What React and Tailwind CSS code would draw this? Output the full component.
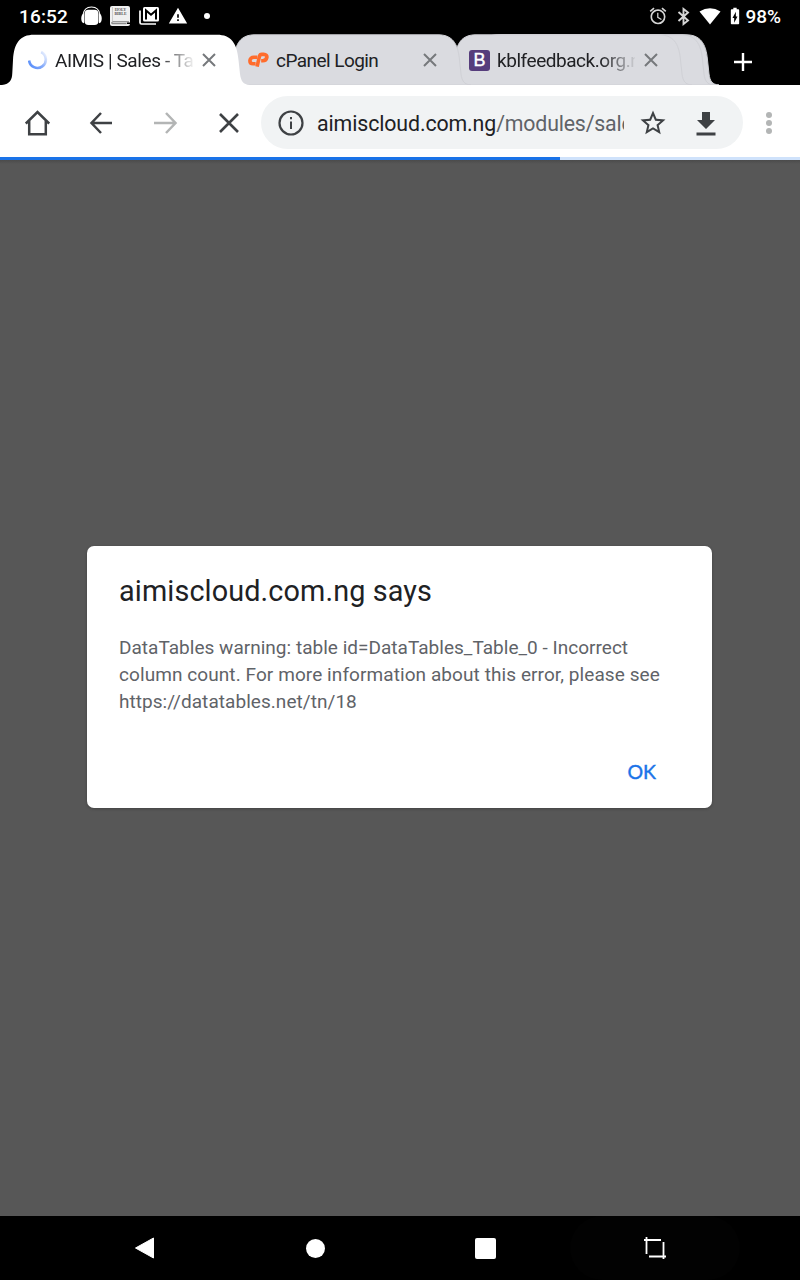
import React from "react";
import { MdAlarm, MdWarning, MdStarBorder, MdBatteryChargingFull } from "react-icons/md";

function TabShape({ fill, stroke = "none" }) {
  return (
    <svg className="absolute inset-0 overflow-visible" width="248" height="50" viewBox="0 0 248 50">
      <path
        d="M0 50C8 49 10 45 10.3 38L11 25C12 8 18 -.2 32 -.2H215C229 -.2 235 8 236.5 25L238 39C239 46 241 49.5 248 50Z"
        fill={fill}
        stroke={stroke}
        strokeWidth="1"
      />
    </svg>
  );
}

function CloseIcon() {
  return (
    <svg width="14" height="14" viewBox="0 0 14 14" className="shrink-0">
      <path d="M1 1L13 13M13 1L1 13" stroke="#76797c" strokeWidth="2" />
    </svg>
  );
}

function Tab({ title, icon, active, className, titleClass }) {
  return (
    <div className={`relative h-[50px] w-[248px] shrink-0 ${className}`}>
      <TabShape fill={active ? "#ffffff" : "#dadbe0"} stroke={active ? "none" : "#d0d1d6"} />
      <div className="relative flex h-full items-center pl-[25px]">
        <span className="flex w-[21px] shrink-0 justify-center">{icon}</span>
        <span
          className={`ml-[7px] w-[138px] shrink-0 overflow-hidden whitespace-nowrap pt-[2px] text-[19px] leading-[28px] text-[#202124] ${titleClass}`}
        >
          {title}
        </span>
        <span className="ml-[9px] flex pt-[0.500px]">
          <CloseIcon />
        </span>
      </div>
    </div>
  );
}

function Spinner() {
  return (
    <svg className="-mt-px" width="20" height="20" viewBox="0 0 20 20">
      <defs>
        <linearGradient id="spin" x1="0" y1="0.8" x2="1" y2="0.1">
          <stop offset="0" stopColor="#5b90fa" />
          <stop offset="0.5" stopColor="#86abfa" />
          <stop offset="1" stopColor="#eef3fe" />
        </linearGradient>
      </defs>
      <path d="M1.100 10.500A8.400 8.400 0 1 0 13.200 2" fill="none" stroke="url(#spin)" strokeWidth="2.600" />
    </svg>
  );
}

function CPanelLogo() {
  return (
    <svg width="22" height="16" viewBox="0 0 22 16">
      <g fill="none" stroke="#ff6c2c" strokeWidth="3.800" strokeLinejoin="round">
        <path d="M9.800 5.100H6.100C3.600 5.100 2 6.700 2 8.700S3.500 11.900 5.400 11.900H8" />
        <path d="M9.500 15L12 4.200Q12.500 2.100 14.400 2.100H16.500C18.800 2.100 20.100 3.600 19.700 5.400C19.300 7.300 17.800 8.800 15.500 8.800H13.800" />
      </g>
    </svg>
  );
}

function BootstrapLogo() {
  return (
    <span className="flex h-[21px] w-[21px] items-center justify-center rounded-[3px] bg-[#563d7c] font-['Liberation_Sans'] text-[18px] leading-none text-white [-webkit-text-stroke:0.4px_white]">
      B
    </span>
  );
}

function StatusBar() {
  return (
    <div className="flex h-[34px] items-center justify-between pb-[2px] pl-[19px] pr-[19px] text-white">
      <div className="flex items-center">
        <span className="w-[62px] text-[19px] font-medium leading-none tracking-[0.150px]">16:52</span>
        <svg width="21" height="20" viewBox="0 0 21 20">
          <path d="M2 9Q3 1 10.500 1Q18 1 19 9" fill="none" stroke="white" strokeWidth="1.200" />
          <rect x="3.500" y="3.800" width="14" height="15.200" rx="4" fill="white" />
          <path d="M3 8.500Q1 9 1 12.500T3 16.500M18 8.500Q20 9 20 12.500T18 16.500" fill="white" stroke="white" strokeWidth="1.500" />
        </svg>
        <span className="relative ml-[8px] flex h-[20px] w-[20px] justify-center rounded-[2px] bg-[#f0f0f0] pl-px pt-[2px] text-center font-['Liberation_Serif'] text-[4px] font-bold leading-[4px] text-[#555]">
          <span>HOLY<br />BIBLE</span>
          <svg className="absolute inset-0" width="20" height="20" viewBox="0 0 20 20">
            <path d="M2.500 1V15" stroke="#ccc" strokeWidth="1" />
            <path d="M2 17.700H16.500M19 15.800H3Q1.500 15.800 1.500 17.500" fill="none" stroke="#777" strokeWidth="1" />
            <path d="M17 16.500H20V18H17Z" fill="black" />
          </svg>
        </span>
        <svg className="ml-[9px]" width="20" height="18" viewBox="0 0 20 18">
          <path d="M1 3.500V15.500Q1 17 2.500 17H17" fill="none" stroke="white" strokeWidth="1.700" />
          <rect x="4" y="0" width="16" height="14.500" rx="1.500" fill="white" />
          <path d="M7 12.500V3.500L12 7.800L17 3.500V12.500" fill="none" stroke="black" strokeWidth="2" />
        </svg>
        <MdWarning className="ml-[9px] text-[20px]" />
        <span className="ml-[16px] h-[6px] w-[6px] rounded-full bg-white" />
      </div>
      <div className="flex items-center">
        <MdAlarm className="text-[20px] text-[#d6d6d6]" />
        <svg className="ml-[6px]" width="19" height="19" viewBox="0 0 19 19">
          <path d="M4.500 5L14 13.500L9.500 17V2L14 5.500L4.500 14" fill="none" stroke="#d6d6d6" strokeWidth="1.900" />
        </svg>
        <svg className="ml-[6px]" width="22" height="17" viewBox="0 0 22 17">
          <path d="M.5 3.500Q11-3 21.500 3.500L11 16.500Z" fill="white" />
        </svg>
        <MdBatteryChargingFull className="ml-[4px] text-[20px]" />
        <span className="text-[19px] font-medium leading-none">98%</span>
      </div>
    </div>
  );
}

function Toolbar() {
  return (
    <div className="relative z-40 flex h-[72px] items-center bg-white pt-1">
      <svg className="ml-[25px]" width="25" height="26" viewBox="0 0 25 26">
        <path d="M.8 13.500L12.500 2L24.200 13.500M4.200 11V24.200H20.800V11" fill="none" stroke="#3e4144" strokeWidth="2.500" />
      </svg>
      <svg className="ml-[39px]" width="24" height="24" viewBox="0 0 24 24">
        <path d="M12 2L2.500 12L12 22M2.500 12H23" fill="none" stroke="#3e4144" strokeWidth="2.500" />
      </svg>
      <svg className="ml-[41px]" width="24" height="24" viewBox="0 0 24 24">
        <path d="M12 2L21.500 12L12 22M21.500 12H0" fill="none" stroke="#b3b5b5" strokeWidth="2.500" />
      </svg>
      <svg className="ml-[40px]" width="22" height="22" viewBox="0 0 22 22">
        <path d="M2 2L20 20M20 2L2 20" stroke="#3e4144" strokeWidth="2.600" />
      </svg>
      <div className="-mt-px ml-[21px] flex h-[53px] w-[482px] shrink-0 items-center rounded-full bg-[#f1f3f4]">
        <svg className="ml-[17px] mt-px shrink-0" width="26" height="26" viewBox="0 0 26 26">
          <circle cx="13" cy="13" r="11.500" fill="none" stroke="#3e4144" strokeWidth="2.200" />
          <path d="M13 11.500V19M13 7V9.200" stroke="#3e4144" strokeWidth="2" />
        </svg>
        <div className="ml-[13px] mt-[3px] w-[307px] shrink-0 overflow-hidden whitespace-nowrap text-[21.330px] leading-[30px] tracking-[-0.180px] text-[#5f6368]">
          <span className="tracking-[-0.110px] text-[#202124]">aimiscloud.com.ng</span>/modules/sales
        </div>
        <MdStarBorder className="ml-[14px] mt-px shrink-0 text-[30px] text-[#3e4144]" />
        <svg className="ml-[28px] mt-[2px] shrink-0" width="20" height="24" viewBox="0 0 20 24">
          <path d="M6 0H14V8H19L10 17L1 8H6ZM.5 20.500H19.500V23.500H.5Z" fill="#3e4144" />
        </svg>
      </div>
      <svg className="ml-[23px]" width="6" height="22" viewBox="0 0 6 22">
        <g fill="#b3b5b5">
          <circle cx="3" cy="3" r="3" />
          <circle cx="3" cy="11" r="3" />
          <circle cx="3" cy="19" r="3" />
        </g>
      </svg>
    </div>
  );
}

export default function App() {
  return (
    <div className="flex h-[1280px] w-[800px] flex-col overflow-hidden bg-black font-[Roboto,sans-serif]">
      <StatusBar />
      <div className="flex h-[51px] items-end pl-[2px]">
        <Tab
          active
          className="z-30"
          icon={<Spinner />}
          title="AIMIS | Sales - Tax"
          titleClass="tracking-[-0.400px] [mask-image:linear-gradient(to_right,black_75%,transparent_102%)]"
        />
        <Tab className="z-20 -ml-[27px]" icon={<CPanelLogo />} title="cPanel Login" titleClass="tracking-[-0.550px]" />
        <Tab
          className="z-10 -ml-[27px]"
          icon={<BootstrapLogo />}
          title="kblfeedback.org.ng"
          titleClass="tracking-[-0.450px] [mask-image:linear-gradient(to_right,black_75%,transparent_102%)]"
        />
        <div className="relative z-[5] -ml-[226px] h-[50px] w-[248px] shrink-0">
          <TabShape fill="#dadbe0" stroke="#d0d1d6" />
        </div>
        <div className="relative -ml-[243px] h-[50px] w-[248px] shrink-0">
          <TabShape fill="#dadbe0" stroke="#d0d1d6" />
        </div>
        <svg className="mb-[14px] ml-[15px] shrink-0" width="18" height="18" viewBox="0 0 18 18">
          <path d="M9 0V18M0 9H18" stroke="white" strokeWidth="2.400" />
        </svg>
      </div>
      <Toolbar />
      <div className="h-[3px] shrink-0 bg-[#cfe2fb]">
        <div className="h-full w-[560px] bg-[#1a73e8]" />
      </div>
      <div className="flex flex-1 flex-col items-center bg-[#575757]">
        <div className="h-1 w-full shrink-0 bg-linear-to-b from-[#4b4b4b] to-[#575757]" />
        <div className="mr-px mt-[382px] flex h-[262px] w-[625px] flex-col rounded-[7px] bg-white px-8 shadow-[0_1px_3px_rgba(0,0,0,0.25)]">
          <h1 className="mt-[26px] text-[28.800px] leading-[38px] tracking-[0.120px] text-[#202124]">aimiscloud.com.ng says</h1>
          <p className="mt-[24px] whitespace-nowrap text-[19px] leading-[27px] tracking-[0.050px] text-[#5f6368]">
            <span className="tracking-[0.020px]">DataTables warning: table id=DataTables_Table_0 - Incorrect</span>
            <br />
            <span className="tracking-[0.080px]">column count. For more information about this error, please see</span>
            <br />
            https://datatables.net/tn/18
          </p>
          <button className="mr-[24px] mt-[44px] self-end font-[Lato,sans-serif] text-[19.500px] leading-[26px] text-[#1a73e8] [-webkit-text-stroke:0.400px_#1a73e8]">
            OK
          </button>
        </div>
      </div>
      <div className="flex h-16 shrink-0 items-center bg-black pl-[60px]">
        <div className="flex w-[170px] justify-center">
          <svg width="22" height="22" viewBox="0 0 22 22">
            <path d="M1.500 11L19.500 1V21Z" fill="white" stroke="white" strokeLinejoin="round" />
          </svg>
        </div>
        <div className="flex w-[170px] justify-center">
          <span className="h-[19px] w-[19px] rounded-full bg-white" />
        </div>
        <div className="flex w-[170px] justify-center">
          <span className="h-[21px] w-[21px] rounded-[2px] bg-white" />
        </div>
        <div className="flex h-16 w-[170px] items-center justify-center rounded-[32px] bg-[#020202]">
          <svg width="24" height="24" viewBox="0 0 24 24">
            <path d="M3.500 1V18M1 4H18M20.500 6V23M6 20.500H23" fill="none" stroke="white" strokeWidth="1.800" />
          </svg>
        </div>
      </div>
    </div>
  );
}
